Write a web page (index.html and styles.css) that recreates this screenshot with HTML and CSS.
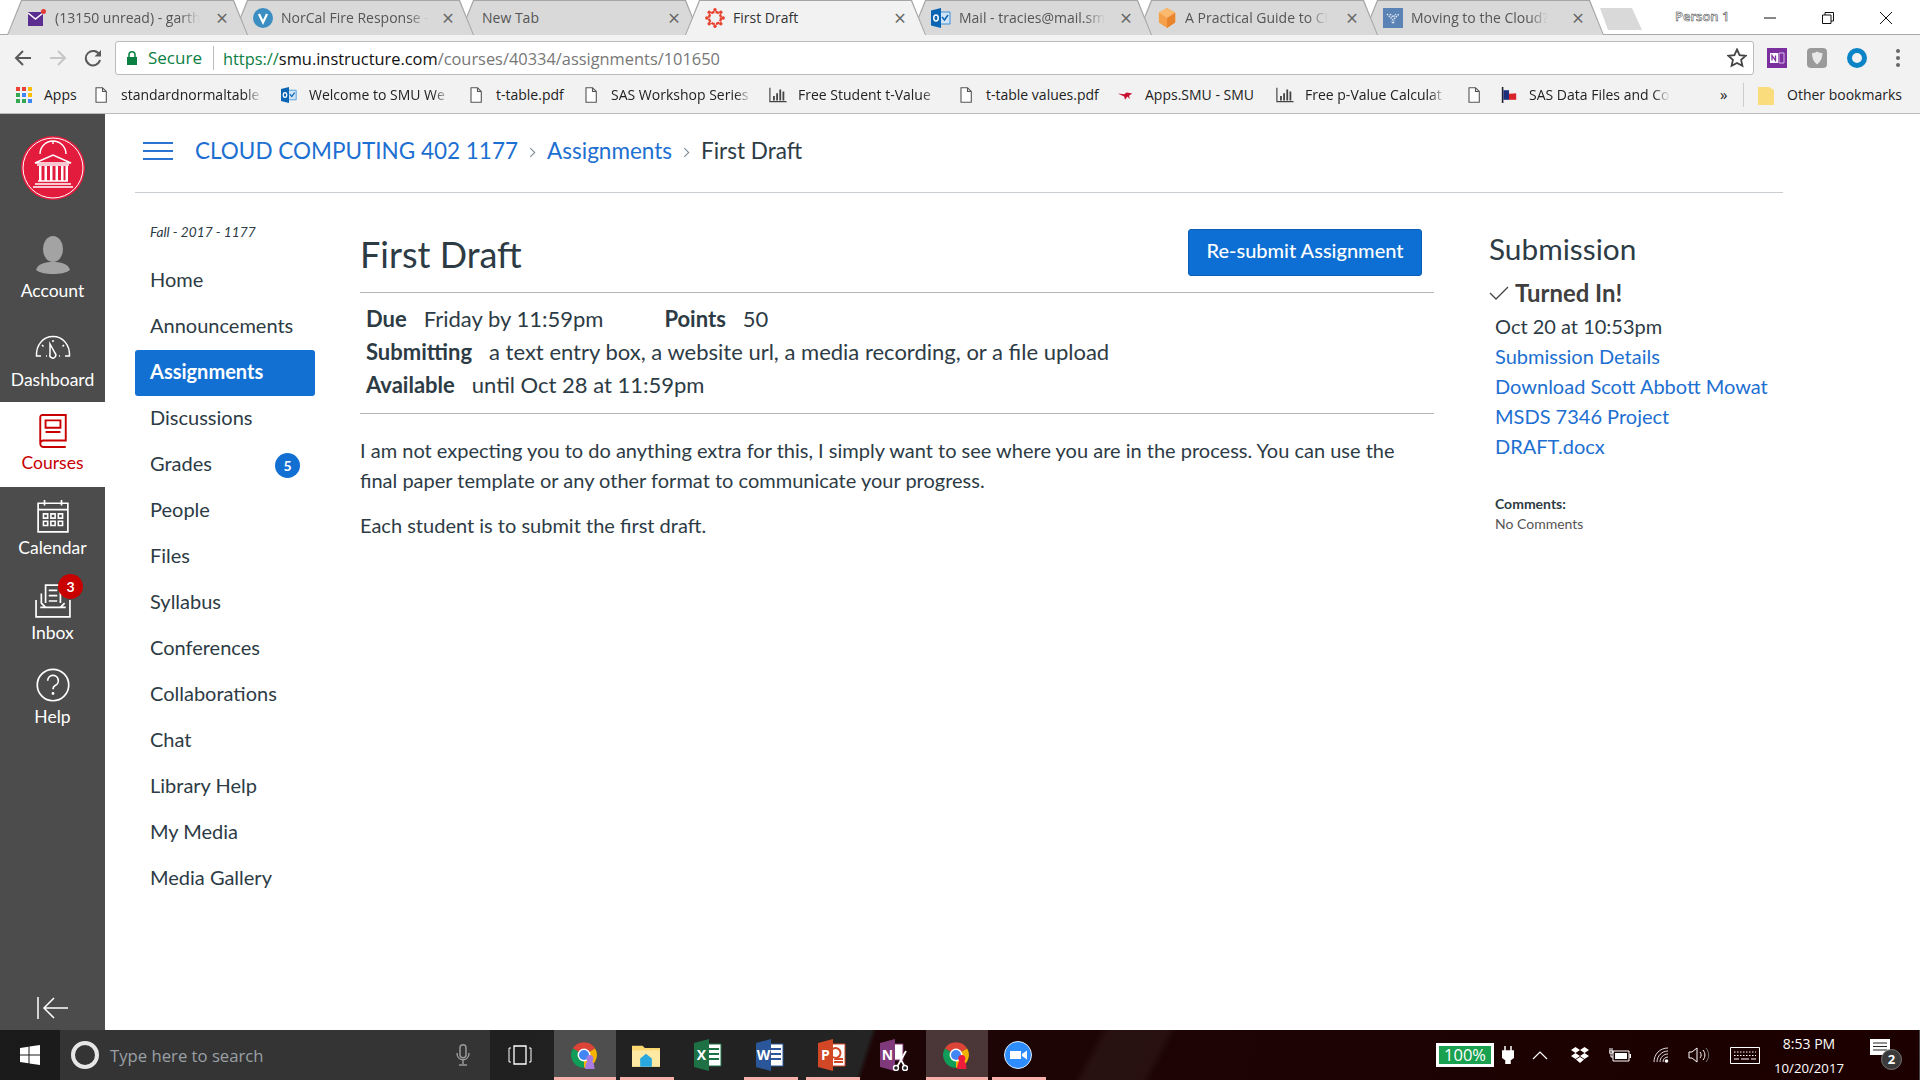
FILE: index.html
```html
<!DOCTYPE html>
<html lang="en">
<head>
    <meta charset="UTF-8">
    <title>First Draft</title>
    <link rel="stylesheet" href="styles.css">
</head>
<body>
    <svg class="defs" width="0" height="0">
        <symbol id="doc" viewBox="0 0 12 16"><path d="M1 .7h6.500L11.300 4.500V15.300H1z M7.500.7V4.500h3.800" fill="#fff" stroke="#555" stroke-width="1.100"/></symbol>
        <symbol id="bars" viewBox="0 0 20 16"><path d="M1 0v15.300h18.500" fill="none" stroke="#444" stroke-width="1.300"/><path d="M4.500 9h2v5h-2zM8 6h2v8H8zM11.500 2h2v12h-2zM15 4h2v10h-2z" fill="#444"/></symbol>
        <symbol id="chrome" viewBox="0 0 24 24"><path d="M12 12L2.470 6.500A11 11 0 0 1 21.530 6.500Z" fill="#db4437"/><path d="M12 12L21.530 6.500A11 11 0 0 1 12 23Z" fill="#f4b400"/><path d="M12 12L12 23A11 11 0 0 1 2.470 6.500Z" fill="#0f9d58"/><circle cx="12" cy="12" r="5.500" fill="#fff"/><circle cx="12" cy="12" r="4.300" fill="#4285f4"/></symbol>
        <symbol id="outlook" viewBox="0 0 20 20"><path d="M8 4h11v12H8z" fill="#cfe4f7" stroke="#3b8fd6"/><path d="M11 9l2.500 3L17 7" fill="none" stroke="#0a64b4" stroke-width="1.500"/><path d="M0 2.500L10 0v20L0 17.500z" fill="#0a64b4"/><ellipse cx="5" cy="10" rx="2.200" ry="3" fill="none" stroke="#fff" stroke-width="1.500"/></symbol>
    </svg>

    <div class="app">
        <!-- browser -->
        <div class="tabstrip">
            <div class="tab">
                <svg class="tab-icon" viewBox="0 0 20 18"><path d="M1 3h15v14H1z" fill="#5c2d91"/><path d="M1 4l7.500 6L16 4" fill="none" stroke="#fff" stroke-width="1.500"/><circle cx="16.500" cy="2.500" r="2.500" fill="#e53935"/></svg>
                <span class="tab-title">(13150 unread) - garth</span><span class="tab-close">×</span>
            </div>
            <div class="tab">
                <svg class="tab-icon" viewBox="0 0 16 16"><circle cx="8" cy="8" r="8" fill="#3b8ec2"/><path d="M4.800 4.800L8 11.500l3.200-6.700" fill="none" stroke="#fff" stroke-width="1.800"/></svg>
                <span class="tab-title">NorCal Fire Response -</span><span class="tab-close">×</span>
            </div>
            <div class="tab tab-plain">
                <span class="tab-title tab-title-full">New Tab</span><span class="tab-close">×</span>
            </div>
            <div class="tab tab-active">
                <svg class="tab-icon" viewBox="0 0 20 20" fill="#e8412e"><circle cx="10" cy="10" r="6" fill="none" stroke="#e8412e" stroke-width="2.400" stroke-dasharray="3.500 1.200"/><circle cx="10" cy="1.800" r="1.700"/><circle cx="10" cy="18.200" r="1.700"/><circle cx="1.800" cy="10" r="1.700"/><circle cx="18.200" cy="10" r="1.700"/><circle cx="4.200" cy="4.200" r="1.700"/><circle cx="15.800" cy="4.200" r="1.700"/><circle cx="4.200" cy="15.800" r="1.700"/><circle cx="15.800" cy="15.800" r="1.700"/></svg>
                <span class="tab-title tab-title-full">First Draft</span><span class="tab-close">×</span>
            </div>
            <div class="tab">
                <svg class="tab-icon" viewBox="0 0 20 20"><use href="#outlook"/></svg>
                <span class="tab-title">Mail - tracies@mail.sm</span><span class="tab-close">×</span>
            </div>
            <div class="tab">
                <svg class="tab-icon" viewBox="0 0 20 22"><path d="M10 0l9 5v11l-9 6-9-6V5z" fill="#f5a04a"/><path d="M10 11l9-6v11l-9 6z" fill="#e8842c"/><path d="M10 0l9 5-9 6-9-6z" fill="#fbb970"/></svg>
                <span class="tab-title">A Practical Guide to Cl</span><span class="tab-close">×</span>
            </div>
            <div class="tab">
                <svg class="tab-icon" viewBox="0 0 20 20"><path d="M0 0h20v20H0z" fill="#5b82b5"/><path d="M4 6l3 3 3 3 3-3 3-3M7 6l3 3 3-3M10 15l-2-2M10 15l2-2" fill="none" stroke="#dfe8f3" stroke-width="1.400" stroke-dasharray="1.500 1"/></svg>
                <span class="tab-title">Moving to the Cloud?</span><span class="tab-close">×</span>
            </div>
            <div class="newtab"></div>
            <div class="profile">Person 1</div>
            <div class="winbtns">
                <svg viewBox="0 0 12 12"><path d="M0 6h12" stroke="#111" fill="none"/></svg>
                <svg viewBox="0 0 12 12"><path d="M.5 3h8.500v8.500H.5zM3 3V.5h8.500V9H9" stroke="#111" fill="none"/></svg>
                <svg viewBox="0 0 12 12"><path d="M0 0l12 12M12 0L0 12" stroke="#111" fill="none"/></svg>
            </div>
        </div>

        <div class="toolbar">
            <svg class="tool" viewBox="0 0 18 18"><path d="M17 9H2M9 2L2 9l7 7" fill="none" stroke="#5a5a5a" stroke-width="2"/></svg>
            <svg class="tool" viewBox="0 0 18 18"><path d="M1 9h15M9 2l7 7-7 7" fill="none" stroke="#c6c6c6" stroke-width="2"/></svg>
            <svg class="tool" viewBox="0 0 18 18"><path d="M15.500 6A7.200 7.200 0 1 0 16 11" fill="none" stroke="#5a5a5a" stroke-width="2"/><path d="M17 1v6.500h-6.500z" fill="#5a5a5a"/></svg>
            <div class="omnibox">
                <svg class="lock" viewBox="0 0 10 14"><path d="M2 6V3.800a3 3 0 0 1 6 0V6" fill="none" stroke="#0b8043" stroke-width="1.500"/><path d="M0 6h10v8H0z" fill="#0b8043"/></svg>
                <span class="secure">Secure</span>
                <span class="url"><span class="url-https">https://</span><span class="url-host">smu.instructure.com</span>/courses/40334/assignments/101650</span>
                <svg class="star" viewBox="0 0 20 20"><path d="M10 1.500l2.600 5.600 6 .7-4.500 4.100 1.300 6L10 15l-5.400 2.900 1.300-6L1.400 7.800l6-.7z" fill="none" stroke="#444" stroke-width="1.800"/></svg>
            </div>
            <div class="extensions">
                <svg viewBox="0 0 20 20"><path d="M0 0h20v20H0z" fill="#7b2f9e"/><path d="M3 5h8v10H3z" fill="#fff"/><path d="M12 5h5v10h-5z" fill="none" stroke="#d9b8e8"/><path d="M5 12.500V7.500l3.500 5V7.500" fill="none" stroke="#7b2f9e" stroke-width="1.300"/></svg>
                <svg viewBox="0 0 20 20"><rect width="20" height="20" rx="4" fill="#9a9a9a"/><path d="M10 3.500c2 1.200 4 1.500 5.500 1.500 0 5-2 9-5.500 11.500C6.500 14 5 10 5 5c2 0 3.500-.5 5-1.500z" fill="#e8e8e8"/></svg>
                <svg viewBox="0 0 20 20"><circle cx="10" cy="10" r="7.500" fill="none" stroke="#0a84c6" stroke-width="5"/></svg>
                <svg class="dots" viewBox="0 0 4 20"><circle cx="2" cy="3" r="2" fill="#666"/><circle cx="2" cy="10" r="2" fill="#666"/><circle cx="2" cy="17" r="2" fill="#666"/></svg>
            </div>
        </div>

        <div class="bookmarks">
            <div class="bm w80">
                <svg class="bm-icon" viewBox="0 0 16 16"><path d="M0 0h4v4H0z" fill="#ea4335"/><path d="M6 0h4v4H6z" fill="#ea4335"/><path d="M12 0h4v4h-4z" fill="#fbbc05"/><path d="M0 6h4v4H0z" fill="#34a853"/><path d="M6 6h4v4H6z" fill="#4285f4"/><path d="M12 6h4v4h-4z" fill="#fbbc05"/><path d="M0 12h4v4H0z" fill="#34a853"/><path d="M6 12h4v4H6z" fill="#34a853"/><path d="M12 12h4v4h-4z" fill="#4285f4"/></svg>
                <span>Apps</span>
            </div>
            <div class="bm w185"><svg class="bm-icon doc"><use href="#doc"/></svg><span class="bm-fade">standardnormaltable.</span></div>
            <div class="bm w190"><svg class="bm-icon"><use href="#outlook"/></svg><span class="bm-fade">Welcome to SMU We</span></div>
            <div class="bm w115"><svg class="bm-icon doc"><use href="#doc"/></svg><span>t-table.pdf</span></div>
            <div class="bm w184"><svg class="bm-icon doc"><use href="#doc"/></svg><span class="bm-fade">SAS Workshop Series</span></div>
            <div class="bm w191"><svg class="bm-icon"><use href="#bars"/></svg><span class="bm-fade">Free Student t-Value</span></div>
            <div class="bm w156"><svg class="bm-icon doc"><use href="#doc"/></svg><span>t-table values.pdf</span></div>
            <div class="bm w160">
                <svg class="bm-icon" viewBox="0 0 20 20"><path d="M1 8l8 1 3-2 7 1-4 3 1 4-3-3-3 4-1-4z" fill="#c8102e"/></svg>
                <span>Apps.SMU - SMU</span>
            </div>
            <div class="bm w192"><svg class="bm-icon"><use href="#bars"/></svg><span class="bm-fade">Free p-Value Calculat</span></div>
            <div class="bm w32"><svg class="bm-icon doc"><use href="#doc"/></svg></div>
            <div class="bm w220">
                <svg class="bm-icon" viewBox="0 0 20 20"><path d="M1 0h2v20H1z" fill="#223"/><path d="M3 4h7v12H3z" fill="#1c2f7a"/><path d="M10 8h9v8h-9z" fill="#d8232a"/><path d="M10 4h5v4h-5z" fill="#eee"/></svg>
                <span class="bm-fade">SAS Data Files and Co</span>
            </div>
            <div class="bm-more">»</div>
            <div class="bm bm-other">
                <svg class="bm-icon" viewBox="0 0 16 20"><path d="M0 2h11l5 3v15H0z" fill="#fbdc7c"/></svg>
                <span>Other bookmarks</span>
            </div>
        </div>

        <!-- canvas -->
        <div class="canvas">
            <nav class="rail">
                <div class="rail-logo">
                    <svg viewBox="0 0 64 64" width="64" height="64">
                        <circle cx="32" cy="32" r="32" fill="#e31c3d"/>
                        <circle cx="32" cy="32" r="30" fill="none" stroke="#fff"/>
                        <path d="M19 18a13 13 0 0 1 26 0M32 5v3M14 27l18-8 18 8zM16 29h32M17 45h30M14 48h36M12 51h40" fill="none" stroke="#fff" stroke-width="1.400"/>
                        <path d="M18 30h2.500v15H18zM23.500 30H26v15h-2.500zM29 30h2.500v15H29zM34.500 30H37v15h-2.500zM40 30h2.500v15H40zM44.500 30H47v15h-2.500z" fill="#fff"/>
                    </svg>
                </div>
                <a class="rail-item rail-account">
                    <svg class="rail-icon" viewBox="0 0 36 38"><ellipse cx="18" cy="13" rx="10" ry="13" fill="#a3a3a3"/><path d="M1 34c2-7 10-8 17-8s15 1 17 8c-4 3-10 4-17 4S5 37 1 34z" fill="#a3a3a3"/></svg>
                    Account
                </a>
                <a class="rail-item rail-dash">
                    <svg class="rail-icon" viewBox="0 0 36 24"><path d="M6 21H1.500C1 10 8 1.500 18 1.500S35 10 34.500 21H30M12 21h-1M25 21h-1" fill="none" stroke="#fff" stroke-width="1.500"/><path d="M15 9l5 9a3 3 0 1 1-5 1z" fill="none" stroke="#fff" stroke-width="1.500"/><path d="M7 10l1.500 1.500M29 10l-1.500 1.500M18 5v2" stroke="#fff" stroke-width="1.500"/></svg>
                    Dashboard
                </a>
                <a class="rail-item rail-active">
                    <svg class="rail-icon" viewBox="0 0 26 32"><path d="M1 27V3a2 2 0 0 1 2-2h22v24H4a3 3 0 0 0 0 6h21" fill="none" stroke="#c80000" stroke-width="1.800"/><path d="M6 6h14v7H6zM6 17h14" fill="none" stroke="#c80000" stroke-width="1.800"/></svg>
                    Courses
                </a>
                <a class="rail-item">
                    <svg class="rail-icon" viewBox="0 0 30 32"><path d="M1 4h28v27H1zM1 10h28M7 1v5M23 1v5" fill="none" stroke="#fff" stroke-width="1.600"/><path d="M6 14h4v4H6zM13 14h4v4h-4zM20 14h4v4h-4zM6 21h4v4H6zM13 21h4v4h-4zM20 21h4v4h-4z" fill="none" stroke="#fff" stroke-width="1.500"/></svg>
                    Calendar
                </a>
                <a class="rail-item">
                    <span class="rail-badge">3</span>
                    <svg class="rail-icon" viewBox="0 0 34 32"><path d="M10 18V1h14v17M13 6h8M13 11h8M13 16h8" fill="none" stroke="#fff" stroke-width="1.600"/><path d="M6 9v9l4 4h14l4-4M1 15v16h32V15M5 22h24" fill="none" stroke="#fff" stroke-width="1.600"/></svg>
                    Inbox
                </a>
                <a class="rail-item">
                    <svg class="rail-icon" viewBox="0 0 32 32"><circle cx="16" cy="16" r="14.800" fill="none" stroke="#fff" stroke-width="1.600"/><path d="M11 12a5 5 0 1 1 7 4.500c-1.500.8-2 1.500-2 3.500" fill="none" stroke="#fff" stroke-width="1.600"/><circle cx="16" cy="24" r="1.300" fill="#fff"/></svg>
                    Help
                </a>
                <div class="rail-collapse">
                    <svg viewBox="0 0 32 22" width="32" height="22"><path d="M1 0v22M31 11H7M17 1L7 11l10 10" fill="none" stroke="#fff" stroke-width="1.500"/></svg>
                </div>
            </nav>

            <div class="page">
                <header class="crumbs">
                    <div class="hamburger"><i></i><i></i><i></i></div>
                    <a>CLOUD COMPUTING 402 1177</a>
                    <svg class="crumb-sep" viewBox="0 0 6 10"><path d="M1 1l4 4-4 4" fill="none" stroke="#7d8a94"/></svg>
                    <a>Assignments</a>
                    <svg class="crumb-sep" viewBox="0 0 6 10"><path d="M1 1l4 4-4 4" fill="none" stroke="#7d8a94"/></svg>
                    <span>First Draft</span>
                </header>

                <div class="columns">
                    <aside class="course-nav">
                        <div class="term">Fall - 2017 - 1177</div>
                        <a>Home</a>
                        <a>Announcements</a>
                        <a class="active">Assignments</a>
                        <a>Discussions</a>
                        <a>Grades <b class="badge">5</b></a>
                        <a>People</a>
                        <a>Files</a>
                        <a>Syllabus</a>
                        <a>Conferences</a>
                        <a>Collaborations</a>
                        <a>Chat</a>
                        <a>Library Help</a>
                        <a>My Media</a>
                        <a>Media Gallery</a>
                    </aside>

                    <main class="assignment">
                        <div class="title-row">
                            <h1>First Draft</h1>
                            <button class="resubmit">Re-submit Assignment</button>
                        </div>
                        <div class="details">
                            <div><b>Due</b><span class="val due">Friday by 11:59pm</span><b>Points</b><span class="val">50</span></div>
                            <div><b>Submitting</b><span class="val">a text entry box, a website url, a media recording, or a file upload</span></div>
                            <div><b>Available</b><span class="val">until Oct 28 at 11:59pm</span></div>
                        </div>
                        <div class="description">
                            <p>I am not expecting you to do anything extra for this, I simply want to see where you are in the process. You can use the final paper template or any other format to communicate your progress.</p>
                            <p>Each student is to submit the first draft.</p>
                        </div>
                    </main>

                    <aside class="submission">
                        <h2>Submission</h2>
                        <div class="turned-in">
                            <svg viewBox="0 0 20 14" width="20" height="14"><path d="M1 7l6 6L19 1" fill="none" stroke="#444" stroke-width="1.300"/></svg>
                            Turned In!
                        </div>
                        <div class="sub-info">
                            <div>Oct 20 at 10:53pm</div>
                            <a>Submission Details</a>
                            <a>Download Scott Abbott Mowat MSDS 7346 Project DRAFT.docx</a>
                        </div>
                        <div class="comments">
                            <b>Comments:</b>
                            <div>No Comments</div>
                        </div>
                    </aside>
                </div>
            </div>
        </div>

        <!-- windows taskbar -->
        <div class="taskbar">
            <div class="start">
                <svg viewBox="0 0 20 20" width="20" height="20"><path d="M0 3l8.500-1.300v7.800H0zM9.500 1.500L20 0v9.500H9.500zM0 10.500h8.500v7.800L0 17zM9.500 10.500H20V20L9.500 18.500z" fill="#fff"/></svg>
            </div>
            <div class="search">
                <span class="cortana"></span>
                <span class="search-text">Type here to search</span>
                <svg class="mic" viewBox="0 0 14 22"><rect x="4" y="0.800" width="6" height="13" rx="3" fill="none" stroke="#999" stroke-width="1.500"/><path d="M1 9c0 9 12 9 12 0M7 16v4M3 21h8" fill="none" stroke="#999" stroke-width="1.500"/></svg>
            </div>
            <div class="taskview">
                <svg viewBox="0 0 24 20" width="24" height="20"><path d="M6 1h12v18H6z" fill="none" stroke="#fff" stroke-width="1.300"/><path d="M3 3H1v14h2M21 3h2v14h-2" fill="none" stroke="#fff"/></svg>
            </div>
            <div class="tb-app tb-active running">
                <svg viewBox="0 0 24 24" width="28" height="28"><use href="#chrome"/><circle cx="17" cy="15" r="3" fill="#a97be0"/><path d="M13 24c0-5 2-8 4-8s4 3 4 8z" fill="#a97be0"/></svg>
            </div>
            <div class="tb-app running">
                <svg viewBox="0 0 24 20" width="28" height="24"><path d="M0 2h9l2 2h13v16H0z" fill="#fbd772"/><path d="M0 6h24v14H0z" fill="#fde8a4"/><path d="M7 13l5-4 5 4v7H7z" fill="#29a8df"/></svg>
            </div>
            <div class="tb-app">
                <svg class="office" viewBox="0 0 28 32" width="28" height="32"><path d="M10 5h17v22H10z" fill="#fff" stroke="#1e7145"/><path d="M15 10h10M15 15h10M15 20h10" stroke="#1e7145" stroke-width="2"/><path d="M0 4l15-4v32L0 28z" fill="#1e7145"/><text x="7.500" y="21" text-anchor="middle" class="office-letter">X</text></svg>
            </div>
            <div class="tb-app running">
                <svg class="office" viewBox="0 0 28 32" width="28" height="32"><path d="M10 5h17v22H10z" fill="#fff" stroke="#2b579a"/><path d="M15 10h10M15 15h10M15 20h10" stroke="#2b579a" stroke-width="2"/><path d="M0 4l15-4v32L0 28z" fill="#2b579a"/><text x="7.500" y="21" text-anchor="middle" class="office-letter">W</text></svg>
            </div>
            <div class="tb-app running">
                <svg class="office" viewBox="0 0 28 32" width="28" height="32"><path d="M10 5h17v22H10z" fill="#fff" stroke="#d24726"/><path d="M18 9a5 5 0 1 1-1 0zM16 20h9M16 23h9" fill="none" stroke="#d24726" stroke-width="2"/><path d="M0 4l15-4v32L0 28z" fill="#d24726"/><text x="7.500" y="21" text-anchor="middle" class="office-letter">P</text></svg>
            </div>
            <div class="tb-app">
                <svg class="office" viewBox="0 0 28 32" width="28" height="32"><path d="M10 5h13v16H10z" fill="#fff" stroke="#80397b"/><path d="M0 4l15-4v32L0 28z" fill="#80397b"/><text x="7.500" y="21" text-anchor="middle" class="office-letter">N</text><path d="M16 12l9 16M26 12l-9 16" stroke="#fff" stroke-width="1.800"/><circle cx="16" cy="29" r="2.500" fill="#222" stroke="#fff" stroke-width="1.400"/><circle cx="25" cy="29" r="2.500" fill="#222" stroke="#fff" stroke-width="1.400"/></svg>
            </div>
            <div class="tb-app tb-hover running">
                <svg viewBox="0 0 24 24" width="28" height="28"><use href="#chrome"/><circle cx="17" cy="15" r="3" fill="#ee1c3a"/><path d="M13 24c0-5 2-8 4-8s4 3 4 8z" fill="#ee1c3a"/></svg>
            </div>
            <div class="tb-app running">
                <svg viewBox="0 0 28 28" width="28" height="28"><circle cx="14" cy="14" r="13.500" fill="#2d8cff" stroke="#dfe9f5"/><path d="M6 10h11v8H6z" fill="#fff"/><path d="M18 13l5-3.500v9L18 15z" fill="#fff"/></svg>
            </div>

            <div class="tray">
                <div class="battery"><span>100%</span></div>
                <svg class="plug" viewBox="0 0 12 18" width="12" height="18"><path d="M3 0v5M9 0v5M0 5h12v6l-4 3v4H4v-4l-4-3z" stroke="#fff" stroke-width="1.500" fill="#fff"/></svg>
                <svg class="chev" viewBox="0 0 16 9" width="16" height="9"><path d="M1 8l7-7 7 7" fill="none" stroke="#fff" stroke-width="1.200"/></svg>
                <svg class="drop" viewBox="0 0 18 16" width="18" height="16"><path d="M4.500 0L9 3 4.500 6 0 3zM13.500 0L18 3l-4.500 3L9 3zM4.500 6L9 9l-4.500 3L0 9zM13.500 6L18 9l-4.500 3L9 9zM9 10l4 2.600L9 16l-4-3.400z" fill="#fff"/></svg>
                <svg class="batt" viewBox="0 0 22 14" width="22" height="14"><path d="M4 3h16v10H4z" fill="none" stroke="#fff"/><path d="M6 5h12v6H6zM20.500 6h1.500v4h-1.500z" fill="#fff"/><path d="M1 0v3M3 0v3M0 3h4v2H0zM2 5v4h2" stroke="#fff" fill="none"/></svg>
                <svg class="wifi" viewBox="0 0 16 16" width="16" height="16"><path d="M1 15C1 7 7 1 15 1M4 15c0-6 5-11 11-11M7 15c0-4.500 3.500-8 8-8M10 15c0-3 2-5 5-5" fill="none" stroke="#ddd"/><circle cx="13.500" cy="14" r="1.800" fill="#fff"/></svg>
                <svg class="vol" viewBox="0 0 22 16" width="22" height="16"><path d="M1 5h3l5-4v14l-5-4H1z" fill="none" stroke="#fff"/><path d="M12 5c1.500 2 1.500 4 0 6M15 3c2.500 3 2.500 7 0 10" fill="none" stroke="#fff"/><path d="M18 1c3.500 4 3.500 10 0 14" fill="none" stroke="#777"/></svg>
                <svg class="keys" viewBox="0 0 30 17" width="30" height="17"><path d="M.5.500h29v16H.5z" fill="none" stroke="#fff"/><path d="M4 5h22M4 8.500h22" stroke="#fff" stroke-dasharray="1.500 1.500"/><path d="M4 12h5M11 12h8M21 12h5" stroke="#fff"/></svg>
                <div class="clock"><div>8:53 PM</div><div class="clock-date">10/20/2017</div></div>
                <div class="notif">
                    <svg viewBox="0 0 20 20" width="20" height="20"><path d="M0 0h20v16H0z" fill="#fff"/><path d="M3 4h14M3 7.500h14M3 11h14" stroke="#222" stroke-width="1.200"/></svg>
                    <span class="notif-count">2</span>
                </div>
            </div>
        </div>
    </div>
</body>
</html>
```

FILE: styles.css
```css
* {
    box-sizing: border-box;
}
body {
    margin: 0;
    font-family: "Open Sans", "Liberation Sans", sans-serif;
    background: #fff;
    color: #2d3b45;
}
a {
    text-decoration: none;
    color: inherit;
}
.defs {
    display: block;
    height: 0;
}
.app {
    width: 1920px;
    height: 1080px;
    display: flex;
    flex-direction: column;
    overflow: hidden;
}

/* tabs */
.tabstrip {
    height: 35px;
    display: flex;
    padding-left: 7px;
    background: #fff;
    border-bottom: 1px solid #aaa;
}
.tab {
    width: 241px;
    height: 35px;
    margin-right: -15px;
    position: relative;
    display: flex;
    align-items: center;
    padding: 0 20px;
    font-size: 14px;
    color: #555;
    background: #a6a6a6;
    clip-path: polygon(0 100%, 14px 0, 227px 0, 241px 100%);
}
.tab::before {
    content: "";
    position: absolute;
    left: 1px;
    right: 1px;
    top: 1px;
    bottom: 0;
    background: #d9d9d9;
    clip-path: polygon(0 100%, 14px 0, 225px 0, 239px 100%);
}
.tab:nth-child(1) { z-index: 7; }
.tab:nth-child(2) { z-index: 6; }
.tab:nth-child(3) { z-index: 5; }
.tab:nth-child(4) { z-index: 9; }
.tab:nth-child(5) { z-index: 4; }
.tab:nth-child(6) { z-index: 3; }
.tab:nth-child(7) { z-index: 2; }
.tab-active {
    color: #333;
}
.tab-active::before {
    background: #f2f2f2;
}
.tab-icon {
    width: 20px;
    height: 20px;
    flex: none;
    margin-right: 8px;
    position: relative;
}
.tab-plain {
    padding-left: 23px;
}
.tab-title {
    white-space: nowrap;
    position: relative;
    -webkit-mask-image: linear-gradient(90deg, #000 86%, transparent);
    mask-image: linear-gradient(90deg, #000 86%, transparent);
}
.tab-title-full {
    -webkit-mask-image: none;
    mask-image: none;
}
.tab-close {
    position: relative;
    margin-left: auto;
    font-size: 21px;
    line-height: 20px;
    color: #666;
}
.newtab {
    width: 42px;
    height: 22px;
    margin: 8px 0 0 11px;
    background: #d9d9d9;
    clip-path: polygon(0 0, 32px 0, 42px 100%, 8px 100%);
}
.profile {
    margin: 6px 0 0 33px;
    font-size: 13px;
    line-height: 20px;
    color: #fff;
    -webkit-text-stroke: .5px #333;
    font-weight: 600;
}
.winbtns {
    margin: 12px 0 0 auto;
    padding-right: 28px;
    display: flex;
    gap: 46px;
}
.winbtns svg {
    width: 12px;
    height: 12px;
}

/* toolbar */
.toolbar {
    height: 43px;
    background: #f2f2f2;
    display: flex;
    align-items: center;
    padding: 3px 0 0 14px;
}
.tool {
    width: 18px;
    height: 18px;
    margin-right: 17px;
    flex: none;
}
.omnibox {
    width: 1639px;
    height: 34px;
    margin-left: -4px;
    background: #fff;
    border: 1px solid #bbb;
    border-radius: 3px;
    display: flex;
    align-items: center;
    padding-left: 11px;
    font-size: 17px;
}
.lock {
    width: 10px;
    height: 14px;
    margin-right: 11px;
}
.secure {
    color: #0b8043;
    padding-right: 11px;
    border-right: 1px solid #bbb;
    line-height: 24px;
    margin-right: 9px;
}
.url {
    color: #777;
    font-size: 16.400px;
}
.url-https {
    color: #0b8043;
}
.url-host {
    color: #111;
}
.star {
    width: 20px;
    height: 20px;
    margin-left: auto;
    margin-right: 6px;
}
.extensions {
    display: flex;
    align-items: center;
    margin-left: 13px;
    gap: 20px;
}
.extensions svg {
    width: 20px;
    height: 20px;
}
.extensions .dots {
    width: 4px;
    margin-left: 9px;
}

/* bookmarks */
.bookmarks {
    height: 36px;
    background: #f2f2f2;
    border-bottom: 1px solid #bbb;
    display: flex;
    align-items: center;
    padding: 0 0 2px 15px;
    font-size: 14px;
    color: #222;
}
.bm {
    display: flex;
    align-items: center;
    flex: none;
    white-space: nowrap;
}
.bm-icon {
    width: 18px;
    height: 16px;
    flex: none;
    margin-right: 11px;
}
.bm-icon.doc {
    width: 12px;
    margin-right: 14px;
}
.bm-fade {
    width: 141px;
    -webkit-mask-image: linear-gradient(90deg, #000 88%, transparent);
    mask-image: linear-gradient(90deg, #000 88%, transparent);
}
.w32 { width: 32px; }
.w80 { width: 80px; }
.w115 { width: 115px; }
.w156 { width: 156px; }
.w160 { width: 160px; }
.w184 { width: 184px; }
.w185 { width: 185px; }
.w190 { width: 190px; }
.w191 { width: 191px; }
.w192 { width: 192px; }
.w220 { width: 220px; }
.bm-more {
    width: 24px;
    font-size: 15px;
    border-right: 1px solid #ccc;
    height: 24px;
    line-height: 22px;
    flex: none;
    margin-right: 14px;
}
.bm-other .bm-icon {
    width: 16px;
    height: 20px;
    margin-right: 13px;
}

/* canvas */
.canvas {
    flex: 1;
    display: flex;
    min-height: 0;
    font-family: Lato, "Liberation Sans", sans-serif;
}
.rail {
    width: 105px;
    flex: none;
    background: #4c4c4c;
    color: #fff;
    display: flex;
    flex-direction: column;
    font-size: 17.500px;
}
.rail-logo {
    height: 119px;
    padding-top: 22px;
    display: flex;
    justify-content: center;
}
.rail-item {
    height: 84.500px;
    display: flex;
    flex-direction: column;
    align-items: center;
    justify-content: flex-end;
    padding-bottom: 13px;
    position: relative;
}
.rail-icon {
    height: 34px;
    width: 36px;
    margin-bottom: 4px;
}
.rail-account {
    padding-bottom: 17px;
}
.rail-account .rail-icon {
    height: 38px;
    margin-bottom: 6px;
}
.rail-dash {
    padding-bottom: 12px;
}
.rail-dash .rail-icon {
    margin-bottom: 5px;
}
.rail-active {
    background: #fff;
    color: #c80000;
    padding-bottom: 14px;
}
.rail-badge {
    position: absolute;
    top: 3px;
    left: 58px;
    width: 25px;
    height: 25px;
    border-radius: 50%;
    background: #c80000;
    font-size: 14px;
    font-weight: 700;
    line-height: 25px;
    text-align: center;
    color: #fff;
}
.rail-collapse {
    margin-top: auto;
    height: 33px;
    display: flex;
    justify-content: center;
    align-items: flex-start;
}

.page {
    flex: 1;
    padding: 0 137px 0 30px;
    font-size: 20px;
}
.crumbs {
    height: 79px;
    border-bottom: 1px solid #c7cdd1;
    display: flex;
    align-items: center;
    padding: 0 0 5px 8px;
    font-size: 22.500px;
}
.crumbs a {
    color: #1d6fd1;
}
.hamburger {
    width: 30px;
    margin-right: 22px;
    display: flex;
    flex-direction: column;
    gap: 6px;
}
.hamburger i {
    display: block;
    height: 2px;
    background: #2a73d3;
}
.crumb-sep {
    width: 7px;
    height: 11px;
    margin: 3px 11px 0;
}
.columns {
    display: flex;
}
.course-nav {
    width: 180px;
    flex: none;
    padding-top: 29px;
}
.term {
    height: 20px;
    line-height: 20px;
    margin: 0 0 16px 15px;
    font-size: 13.700px;
    font-style: italic;
}
.course-nav a {
    display: flex;
    align-items: center;
    justify-content: space-between;
    height: 46px;
    padding: 0 15px 5px;
    border-radius: 3px;
}
.course-nav a.active {
    background: #1270d3;
    color: #fff;
    font-weight: 700;
}
.badge {
    width: 25px;
    height: 25px;
    border-radius: 50%;
    background: #1270d3;
    color: #fff;
    font-size: 14px;
    line-height: 25px;
    text-align: center;
    margin-top: 5px;
}

.assignment {
    width: 1074px;
    margin-left: 45px;
    flex: none;
}
.title-row {
    height: 100px;
    padding: 36px 12px 0 0;
    display: flex;
    justify-content: space-between;
    border-bottom: 1px solid #b5b5b5;
}
h1 {
    margin: 0;
    font-size: 36px;
    font-weight: 400;
    line-height: 50px;
}
.resubmit {
    width: 234px;
    height: 47px;
    padding-bottom: 6px;
    background: #0d6fd3;
    color: #fff;
    border: 1px solid #0a5fb5;
    border-radius: 3px;
    font-family: inherit;
    font-size: 20px;
    font-weight: 500;
}
.details {
    padding: 9px 0 12px 6px;
    font-size: 22px;
    line-height: 33px;
    border-bottom: 1px solid #b5b5b5;
}
.details b {
    font-weight: 700;
}
.val {
    margin-left: 17px;
}
.val.due {
    margin-right: 61px;
}
.description {
    padding-top: 21px;
    line-height: 30px;
}
.description p {
    margin: 0 0 15px;
}

.submission {
    margin-left: 55px;
    padding-top: 36px;
    flex: 1;
}
h2 {
    margin: 0 0 7px;
    font-size: 29.800px;
    font-weight: 400;
    line-height: 40px;
}
.turned-in {
    display: flex;
    align-items: center;
    gap: 6px;
    font-size: 23.900px;
    font-weight: 700;
    line-height: 34px;
    color: #3f3f3f;
}
.sub-info {
    margin: 1px 0 0 6px;
    line-height: 30px;
    width: 280px;
}
.sub-info a {
    display: block;
    color: #1d6fd1;
}
.comments {
    margin: 33px 0 0 6px;
    font-size: 14px;
    line-height: 20px;
    color: #555;
}
.comments b {
    color: #2d3b45;
}

/* taskbar */
.taskbar {
    height: 50px;
    flex: none;
    display: flex;
    align-items: stretch;
    font-family: "Open Sans", "Liberation Sans", sans-serif;
    color: #fff;
    background:
        linear-gradient(118deg, transparent 56.500%, rgba(255, 255, 255, .05) 57%, rgba(255, 255, 255, .05) 60%, transparent 60.500%),
        linear-gradient(108deg, #1a1a1a 0, #242424 45%, #1e0505 45.300%, #1c0000 100%);
}
.start {
    width: 60px;
    display: flex;
    align-items: center;
    justify-content: center;
}
.search {
    width: 430px;
    background: #343434;
    display: flex;
    align-items: center;
    padding-left: 11px;
    font-size: 16.700px;
    color: #9aa0a6;
}
.cortana {
    width: 28px;
    height: 28px;
    border-radius: 50%;
    border: 4px solid #e6e6e6;
    margin-right: 11px;
}
.mic {
    width: 14px;
    height: 22px;
    margin-left: auto;
    margin-right: 20px;
}
.taskview {
    width: 64px;
    display: flex;
    align-items: center;
    justify-content: center;
    padding-right: 4px;
}
.tb-app {
    width: 62px;
    display: flex;
    align-items: center;
    justify-content: center;
    padding-right: 2px;
    position: relative;
    flex: none;
}
.tb-active {
    background: #4e4e4e;
}
.tb-hover {
    background: rgba(255, 255, 255, .2);
}
.running::after {
    content: "";
    position: absolute;
    left: 4px;
    right: 4px;
    bottom: 0;
    height: 3px;
    background: #f8b0aa;
}
.tb-active::after,
.tb-hover::after {
    left: 0;
    right: 0;
}
.office-letter {
    font-family: "Open Sans", sans-serif;
    font-size: 14px;
    font-weight: 700;
    fill: #fff;
}
.tray {
    margin-left: auto;
    display: flex;
    align-items: center;
    padding-right: 5px;
    border-right: 1px solid #444;
    width: 485px;
}
.battery {
    width: 58px;
    height: 24px;
    border: 3px solid #fff;
    background: #1aa14f;
    font-size: 16.500px;
    line-height: 17px;
    text-align: center;
    margin-left: 1px;
}
.plug { margin-left: 8px; }
.chev { margin-left: 18px; }
.drop { margin-left: 23px; }
.batt { margin-left: 20px; }
.wifi { margin-left: 22px; }
.vol { margin-left: 19px; }
.keys { margin-left: 20px; }
.clock {
    width: 88px;
    margin-left: 5px;
    padding-top: 2px;
    text-align: center;
    font-size: 14px;
    line-height: 24px;
}
.clock-date {
    font-size: 13.200px;
}
.notif {
    margin-left: 17px;
    position: relative;
    width: 30px;
    height: 32px;
}
.notif-count {
    position: absolute;
    left: 11px;
    top: 10px;
    width: 21px;
    height: 21px;
    border-radius: 50%;
    background: #3a3a3a;
    border: 1px solid #777;
    font-size: 13px;
    font-weight: 700;
    line-height: 19px;
    text-align: center;
}
```
